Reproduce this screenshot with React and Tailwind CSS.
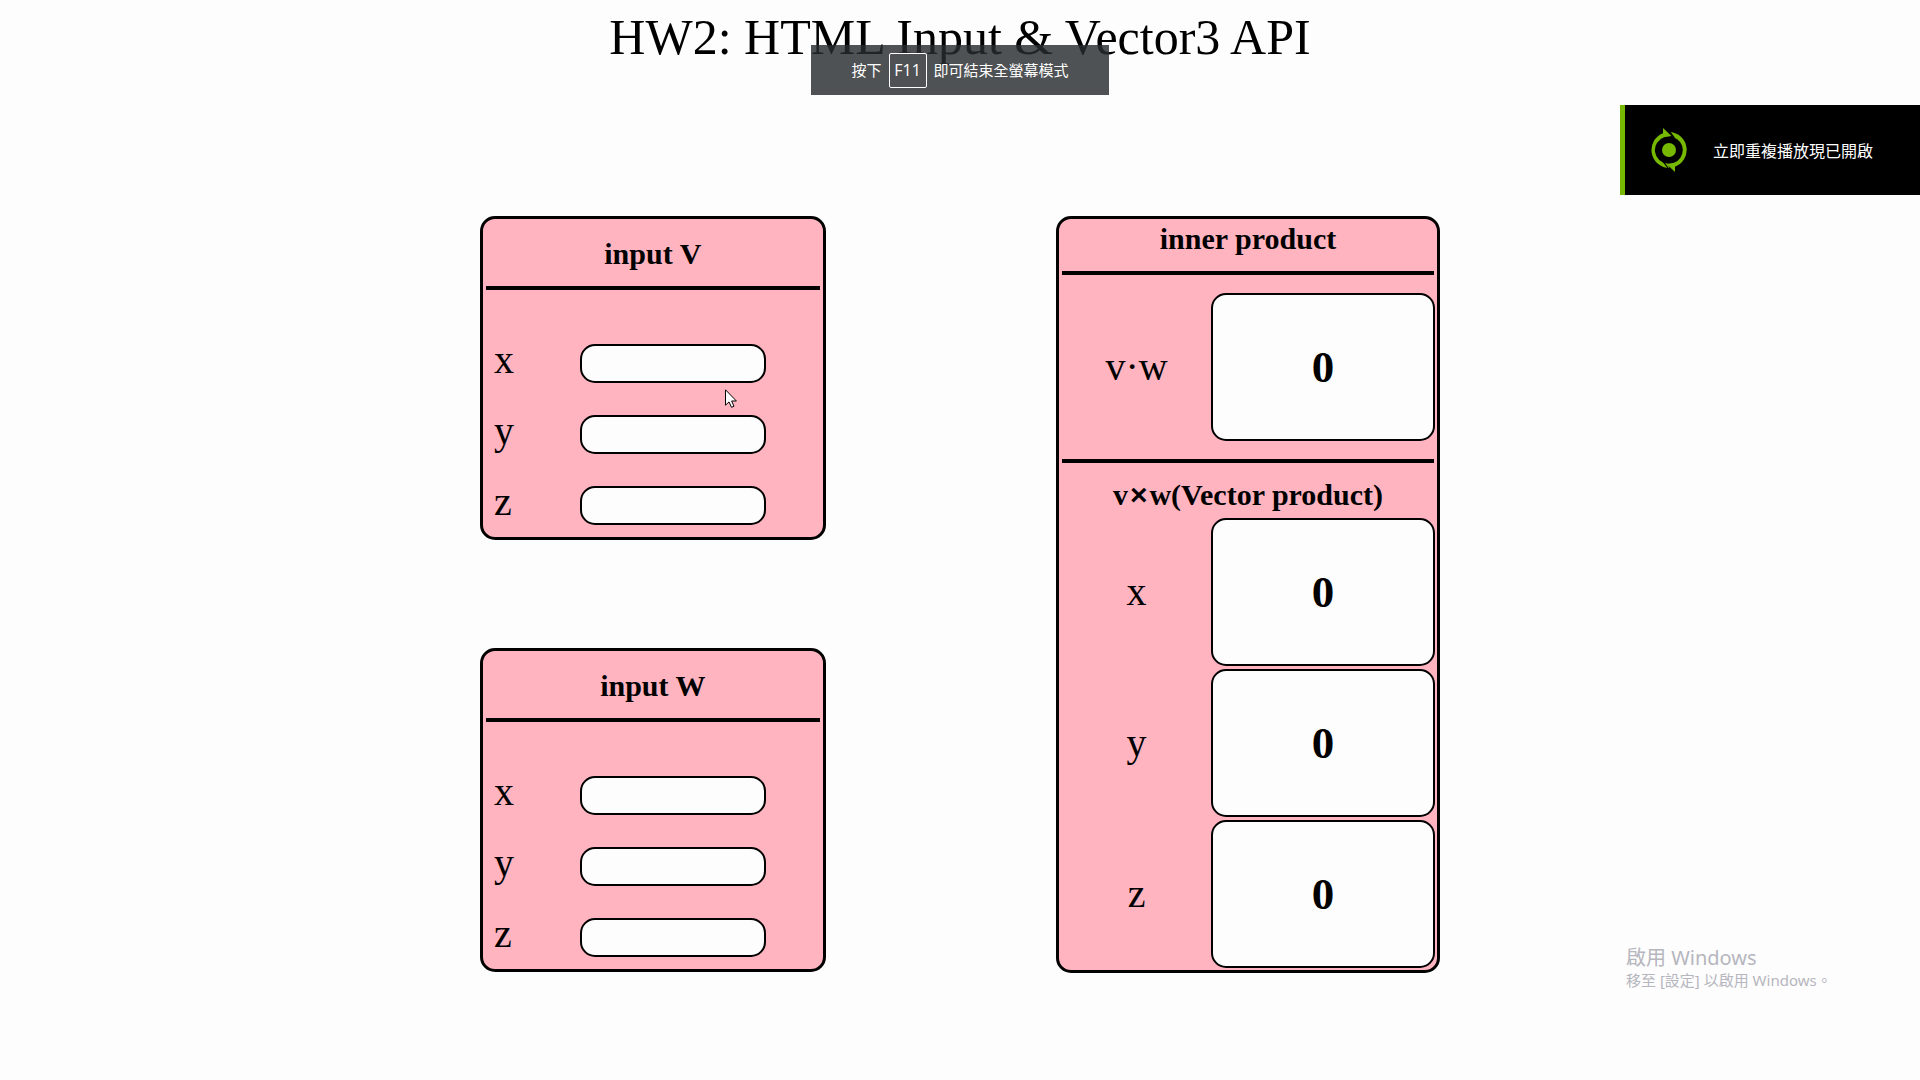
import React from "react";

const axes = ["x", "y", "z"];

function VectorInput({ name }) {
  return (
    <section className="h-[324px] rounded-[15px] border-[3px] border-black bg-[#ffb4c0] px-[3px]">
      <h2 className="border-b-4 border-black pt-[18px] pb-[15px] text-center text-[30px] leading-[34px] font-bold">
        input {name}
      </h2>
      <div className="mt-[54px] flex flex-col gap-8 pl-2">
        {axes.map((axis) => (
          <div key={axis} className="flex h-[39px] items-center">
            <label htmlFor={name + axis} className="-mt-2 w-[86px] text-[40px] leading-[40px]">
              {axis}
            </label>
            <input
              id={name + axis}
              type="text"
              className="h-full w-[57%] rounded-[15px] border-2 border-black bg-[#fdfdfd] px-3 text-2xl"
            />
          </div>
        ))}
      </div>
    </section>
  );
}

function ResultRow({ id, label }) {
  return (
    <div className="-mr-px flex h-[148px] items-center">
      <label htmlFor={id} className="w-[40%] text-center text-[40px] leading-[46px]">
        {label}
      </label>
      <output
        id={id}
        className="flex h-full flex-1 items-center justify-center rounded-[15px] border-2 border-black bg-[#fdfdfd] text-[45px] leading-[52px] font-bold"
      >
        0
      </output>
    </div>
  );
}

function Results() {
  return (
    <section className="rounded-[15px] border-[3px] border-black bg-[#ffb4c0] px-[3px] pb-[2px]">
      <h2 className="border-b-4 border-black pt-[3px] pb-[15px] text-center text-[30px] leading-[34px] font-bold">
        inner product
      </h2>
      <div className="border-b-4 border-black py-[18px]">
        <ResultRow id="dot" label="v·w" />
      </div>
      <h2 className="pt-[15px] pb-[6px] text-center text-[30px] leading-[34px] font-bold">
        v<span className="mx-[2px] font-['Liberation_Sans',sans-serif]">×</span>w(Vector product)
      </h2>
      <div className="flex flex-col gap-[3px]">
        {axes.map((axis) => (
          <ResultRow key={axis} id={"cross-" + axis} label={axis} />
        ))}
      </div>
    </section>
  );
}

function FullscreenHint() {
  return (
    <div className="absolute top-[45px] left-1/2 flex h-[50px] w-[298px] -translate-x-1/2 items-center justify-center gap-[7px] bg-[#282c30]/82 font-['Noto_Sans_CJK_TC',sans-serif] text-[15px] leading-5 text-white">
      <span>按下</span>
      <kbd className="flex h-[35px] w-[38px] items-center justify-center rounded-xs border border-white font-['Open_Sans',sans-serif] text-base">
        F11
      </kbd>
      <span>即可結束全螢幕模式</span>
    </div>
  );
}

function ReplayToast() {
  return (
    <div className="absolute top-[105px] right-0 flex h-[90px] w-[300px] items-center border-l-[5px] border-[#76b900] bg-black font-['Noto_Sans_CJK_TC',sans-serif] text-base text-white">
      <svg viewBox="0 0 36 44" className="ml-[26px] h-11 w-9 shrink-0 fill-[#76b900]" aria-hidden="true">
        <circle cx="18" cy="22" r="7" />
        <path d="M12 0 L20.5 8 L13 9.2 A13.6 13.6 0 0 0 16.5 35.6 L18.4 40 A18 18 0 0 1 12 5.2 Z" />
        <path d="M24 44 L15.5 36 L23 34.8 A13.6 13.6 0 0 0 22.5 9.2 L19 4 A18 18 0 0 1 24 38.8 Z" />
        <path d="M18.6 3.5 L23.4 9.8" stroke="#000" strokeWidth="1.2" />
        <path d="M17.4 40.5 L12.6 34.2" stroke="#000" strokeWidth="1.2" />
      </svg>
      <span className="ml-[26px]">立即重複播放現已開啟</span>
    </div>
  );
}

function ActivationNotice() {
  return (
    <div className="absolute top-[946px] right-[90px] w-[204px] font-['Noto_Sans','Noto_Sans_CJK_TC',sans-serif] whitespace-nowrap text-[#b6b6be]">
      <p className="text-xl leading-6">啟用 Windows</p>
      <p className="text-[15px] leading-5">移至 [設定] 以啟用 Windows。</p>
    </div>
  );
}

function Pointer() {
  return (
    <svg viewBox="0 0 12 19" className="absolute top-[389px] left-[725px] h-[19px] w-3" aria-hidden="true">
      <path
        d="M.5 .8 V16.2 L4 12.9 L6.5 18.3 L9 17.2 L6.6 12 H11.4 Z"
        fill="#fff"
        stroke="#000"
        strokeWidth="1"
      />
    </svg>
  );
}

export default function App() {
  return (
    <div className="relative min-h-screen bg-[#fdfdfd] pb-[108px] font-['Liberation_Serif',serif] text-black">
      <h1 className="pt-[9px] text-center text-[50px] leading-[57px]">HW2: HTML Input &amp; Vector3 API</h1>
      <main className="mt-[150px] flex items-start">
        <div className="ml-[25%] flex w-[18%] flex-col gap-[108px]">
          <VectorInput name="V" />
          <VectorInput name="W" />
        </div>
        <div className="ml-[12%] w-[20%]">
          <Results />
        </div>
      </main>
      <FullscreenHint />
      <ReplayToast />
      <ActivationNotice />
      <Pointer />
    </div>
  );
}
